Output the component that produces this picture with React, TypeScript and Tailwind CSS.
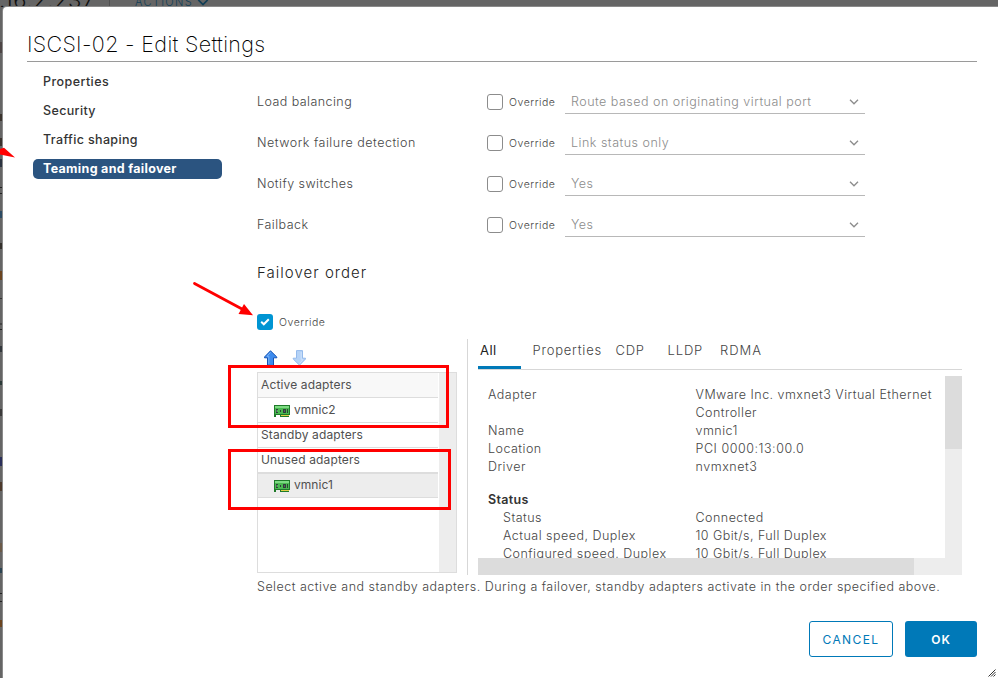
import { ReactNode } from 'react';

const NAV = [
  { label: 'Properties', cls: 'tracking-[0.44px]' },
  { label: 'Security', cls: 'tracking-[0.36px]' },
  { label: 'Traffic shaping', cls: 'tracking-[0.36px]' },
];

const POLICIES = [
  { label: 'Load balancing', value: 'Route based on originating virtual port', cls: 'tracking-[0.44px]' },
  { label: 'Network failure detection', value: 'Link status only', cls: 'tracking-[0.51px]' },
  { label: 'Notify switches', value: 'Yes', cls: 'tracking-[0.46px]' },
  { label: 'Failback', value: 'Yes', cls: 'tracking-[0.45px]' },
];

const DETAILS = [
  { label: 'Adapter', value: 'VMware Inc. vmxnet3 Virtual Ethernet Controller', cls: 'tracking-[0.47px]' },
  { label: 'Name', value: 'vmnic1', cls: '' },
  { label: 'Location', value: 'PCI 0000:13:00.0', cls: 'tracking-[0.54px]' },
  { label: 'Driver', value: 'nvmxnet3', cls: 'tracking-[0.54px]' },
];

const STATUS = [
  { label: 'Status', value: 'Connected' },
  { label: 'Actual speed, Duplex', value: '10 Gbit/s, Full Duplex', cls: 'tracking-[0.45px]' },
  { label: 'Configured speed, Duplex', value: '10 Gbit/s, Full Duplex', cls: 'tracking-[0.45px]' },
];

/* Slivers of the dimmed page left of the dialog */
const SLIVERS = [
  { top: 42, height: 11, color: '#4d4545' },
  { top: 114, height: 7, color: '#3a332e' },
  { top: 138, height: 8, color: '#3a332e' },
  { top: 159, height: 8, color: '#2c3440' },
  { top: 187, height: 1, color: '#222' },
  { top: 193, height: 1, color: '#222' },
  { top: 211, height: 7, color: '#2b4a63' },
  { top: 243, height: 6, color: '#33302c' },
  { top: 271, height: 9, color: '#6b4520' },
  { top: 298, height: 1, color: '#333' },
  { top: 323, height: 2, color: '#444' },
  { top: 329, height: 1, color: '#222' },
  { top: 346, height: 6, color: '#33383d' },
  { top: 381, height: 4, color: '#2b3a38' },
  { top: 409, height: 7, color: '#3b3a3a' },
  { top: 457, height: 9, color: '#2b2f5a' },
  { top: 482, height: 9, color: '#4d3a2c' },
  { top: 543, height: 9, color: '#6b5a48' },
  { top: 568, height: 5, color: '#2c4452' },
  { top: 593, height: 1, color: '#222' },
  { top: 601, height: 1, color: '#222' },
  { top: 620, height: 7, color: '#6b4520' },
];

function Chevron({ className }: { className: string }) {
  return (
    <svg viewBox="0 0 10 6" className={className} fill="none" stroke="currentColor">
      <path d="M1 .8 5 4.8 9 .8" />
    </svg>
  );
}

function MoveArrow({ down, light }: { down?: boolean; light?: boolean }) {
  return (
    <svg viewBox="0 0 14 16" className={down ? 'h-4 w-3.5 rotate-180' : 'h-4 w-3.5'}>
      <path
        d="M6.5 .8 12.8 7V7.8H9.5V15.4H3.5V7.8H.5V7Z"
        fill={light ? '#b4d2f6' : '#3d8bee'}
        stroke={light ? '#94baec' : '#1454b5'}
      />
      <path d="M6.5 2.4 3 6.3H4.8V14" fill="none" stroke={light ? '#cfe2fb' : '#7db6f8'} />
    </svg>
  );
}

function NicIcon() {
  return (
    <svg viewBox="0 0 16 12" className="mt-[2px] h-3 w-4 shrink-0" shapeRendering="crispEdges">
      <path d="M0 0H16V10H15V12H6V10H2V12H0Z" fill="#1f7a2a" />
      <path d="M1 1H15V9H1Z" fill="#4ab852" />
      <path d="M1 1H15V3H1Z" fill="#7ddb82" />
      <path d="M7 10H15V11H7Z" fill="#e0cf48" />
      <path d="M2 4H4V5H2ZM2 7H4V8H2ZM6 5H7V7H6ZM9 4H12V8H9ZM13 4H14V8H13Z" fill="#2f4238" />
      <path d="M2 5H3V7H2ZM10 5H11V7H10Z" fill="#5c5468" />
    </svg>
  );
}

function ListRow({ children, className = '' }: { children: ReactNode; className?: string }) {
  return (
    <div className={`flex h-[25px] items-center border-b border-[#ddd] text-[12px] text-[#505050] ${className}`}>
      {children}
    </div>
  );
}

function DetailRow({ label, value, indent, cls }: { label: string; value: string; indent?: boolean; cls?: string }) {
  return (
    <div className="flex">
      <div className={`w-[207.5px] shrink-0 whitespace-nowrap ${indent ? 'pl-[15px]' : ''}`}>{label}</div>
      <div className={`w-[245px] ${cls ?? ''}`}>{value}</div>
    </div>
  );
}

export default function App() {
  return (
    <div className="relative h-[678px] w-[998px] overflow-hidden bg-[#656565] pl-[3px] pt-[7px] font-['Inter',sans-serif]">
      {/* dimmed page behind the dialog */}
      <div className="absolute left-0 top-0 h-[7px] w-full overflow-hidden">
        <div className="absolute -top-[13px] left-[-1px] whitespace-nowrap text-[22px] font-light leading-[26px] tracking-[0.6px] text-[#111]">
          .16.2.237
        </div>
        <div className="absolute left-[109px] top-0 h-[7px] w-px bg-[#505050]" />
        <div className="absolute -top-[5px] left-[135px] text-[11px] font-light leading-[14px] tracking-[1.35px] text-[#123f57]">
          ACTIONS
        </div>
        <Chevron className="absolute -top-[1px] left-[197px] h-[7px] w-[12px] stroke-[1.5] text-[#123f57]" />
      </div>
      {SLIVERS.map((s) => (
        <div
          key={s.top}
          className="absolute left-0 w-[2px]"
          style={{ top: s.top, height: s.height, backgroundColor: s.color }}
        />
      ))}

      <div className="relative h-full w-full rounded-tl-[4px] bg-white shadow-[0_0_0_1px_#8a8a8a]">
        <div className="ml-6 mr-[21px] flex h-[55px] items-end border-b border-[#9a9a9a] pb-[4px]">
          <h1 className="whitespace-nowrap text-[21.5px] font-extralight leading-[26px] tracking-[0.32px] text-black">
            ISCSI-02 - Edit Settings
          </h1>
        </div>

        <div className="flex">
          <nav className="ml-[30px] mt-[10px] flex w-[189px] flex-col gap-[9px] text-[12.5px] font-medium text-[#333]">
            {NAV.map((n) => (
              <div key={n.label} className={`flex h-5 items-center pl-[10px] ${n.cls}`}>
                {n.label}
              </div>
            ))}
            <div className="flex h-5 items-center rounded-[5px] bg-[#2b5480] pl-[10px] font-bold tracking-[0.31px] text-white">
              Teaming and failover
            </div>
          </nav>

          <main className="ml-[35px] w-[710px] text-[#454545]">
            <div className="mt-[29px] flex flex-col gap-[18px]">
              {POLICIES.map((p) => (
                <div key={p.label} className="flex h-[23px]">
                  <div className={`flex h-[23px] w-[230px] items-center text-[12.5px] font-light ${p.cls}`}>{p.label}</div>
                  <div className="mt-[3px] h-4 w-4 rounded-[3px] border border-[#8c8c8c]" />
                  <div className="ml-[6px] mt-px flex h-[21px] w-14 items-center text-[10.5px] font-light tracking-[0.52px] text-[#454545]">
                    Override
                  </div>
                  <div className="flex w-[300px] items-start justify-between border-b border-[#b8b8b8] pl-[6px] pr-[6px] text-[12.5px] font-light tracking-[0.49px] text-[#8c8c8c]">
                    <span className="flex h-[23px] items-center">{p.value}</span>
                    <Chevron className="mt-[8px] h-[6px] w-[10px] stroke-[1.3] text-[#8c8c8c]" />
                  </div>
                </div>
              ))}
            </div>

            <h2 className="mt-[24px] text-[15px] font-light leading-[24px] tracking-[1.03px] text-[#222]">Failover order</h2>

            <div className="mt-[29px] flex h-4 items-center">
              <div className="flex h-4 w-4 items-center justify-center rounded-[3px] bg-[#0095d3]">
                <svg viewBox="0 0 16 16" className="h-4 w-4" fill="none" stroke="#fff" strokeWidth="2">
                  <path d="M4.2 7.8 6.8 10.3 11.8 5.2" />
                </svg>
              </div>
              <span className="ml-[6px] mt-[2px] text-[10.5px] font-light tracking-[0.52px]">Override</span>
            </div>

            <div className="flex h-[245px]">
              <div className="w-[200px] pt-5">
                <div className="flex h-[22px] gap-[14px] pl-[7px]">
                  <MoveArrow />
                  <MoveArrow down light />
                </div>
                <div className="flex h-[201px] border border-[#ddd]">
                  <div className="w-[181px] pr-px">
                    <ListRow className="bg-[#f8f8f8] pl-[3px] tracking-[0.14px]">Active adapters</ListRow>
                    <ListRow className="gap-1 pl-4 tracking-[0.05px]">
                      <NicIcon />
                      vmnic2
                    </ListRow>
                    <ListRow className="pl-[3px] tracking-[0.12px]">Standby adapters</ListRow>
                    <ListRow className="pl-[3px] tracking-[0.14px]">Unused adapters</ListRow>
                    <ListRow className="gap-1 bg-[#ededed] pl-4 tracking-[0.05px] shadow-[inset_0_1px_0_#ddd]">
                      <NicIcon />
                      vmnic1
                    </ListRow>
                  </div>
                  <div className="flex-1 bg-[#ededed]" />
                </div>
              </div>

              <div className="ml-[10px] mt-[9px] w-[495px] border-l border-[#d7d7d7] pl-[10px]">
                <div className="flex h-[31px] border-b border-[#d7d7d7] text-[13px] font-light">
                  <div className="-mr-px h-[30px] w-[43px] border-b-[3px] border-[#0079b8] pl-[2px] pt-[2px] font-normal tracking-[0.5px] text-[#222]">
                    All
                  </div>
                  <div className="ml-[12.5px] w-[83px] pt-[2px] tracking-[0.77px]">Properties</div>
                  <div className="w-[52px] pt-[2px] tracking-[0.75px]">CDP</div>
                  <div className="w-[52.5px] pt-[2px] tracking-[0.85px]">LLDP</div>
                  <div className="pt-[2px] tracking-[1px]">RDMA</div>
                </div>
                <div className="mt-[6px] h-[199px]">
                  <div className="flex h-[182px]">
                    <div className="w-[467px] overflow-hidden pl-[10px] pt-[10px] text-[12.5px] font-light leading-[18px] tracking-[0.48px]">
                      {DETAILS.map((d) => (
                        <DetailRow key={d.label} {...d} />
                      ))}
                      <div className="mt-[15px] font-semibold tracking-[0.33px] text-[#333]">Status</div>
                      {STATUS.map((d) => (
                        <DetailRow key={d.label} indent {...d} />
                      ))}
                    </div>
                    <div className="w-[17px] bg-[#ededed]">
                      <div className="h-[73px] bg-[#dcdcdc]" />
                    </div>
                  </div>
                  <div className="h-[17px] bg-[#ededed]">
                    <div className="h-full w-[436px] bg-[#dcdcdc]" />
                  </div>
                </div>
              </div>
            </div>

            <p className="mt-[2px] whitespace-nowrap text-[12.5px] font-light leading-5 tracking-[0.487px]">
              Select active and standby adapters. During a failover, standby adapters activate in the order specified above.
            </p>
          </main>
        </div>

        <div className="mr-[21px] mt-[24px] flex h-9 justify-end gap-3">
          <button className="w-[84px] rounded-[3px] border border-[#0079b8] pt-px text-[12px] font-normal tracking-[1.4px] text-[#0079b8]">
            CANCEL
          </button>
          <button className="w-[72px] rounded-[3px] bg-[#0079b8] pt-px text-[12px] font-semibold tracking-[1px] text-white">OK</button>
        </div>

        <svg viewBox="0 0 8 8" className="absolute bottom-px right-[2px] h-2 w-2" stroke="#333" strokeWidth="1">
          <path d="M.5 7.5 7.5 .5M3 7.5 7.5 3M5.5 7.5 7.5 5.5" />
        </svg>
      </div>

      {/* annotations drawn over the dialog */}
      <div className="absolute left-[228px] top-[365px] h-[63px] w-[221px] border-[3px] border-[#ff0000]" />
      <div className="absolute left-[228px] top-[449px] h-[61px] w-[223px] border-[3px] border-[#ff0000]" />
      <svg viewBox="0 0 70 40" className="absolute left-[188px] top-[278px] h-10 w-[70px]">
        <path d="M6.5 5.5 54 31" stroke="#f00" strokeWidth="2.8" strokeLinecap="round" />
        <path d="M65 37.2 50.5 36 56 26Z" fill="#f00" />
      </svg>
      <svg viewBox="0 0 16 12" className="absolute left-0 top-[147px] h-3 w-4">
        <path d="M0 2 4 .8 15 10.5 0 7.5Z" fill="#f00" />
      </svg>
    </div>
  );
}
